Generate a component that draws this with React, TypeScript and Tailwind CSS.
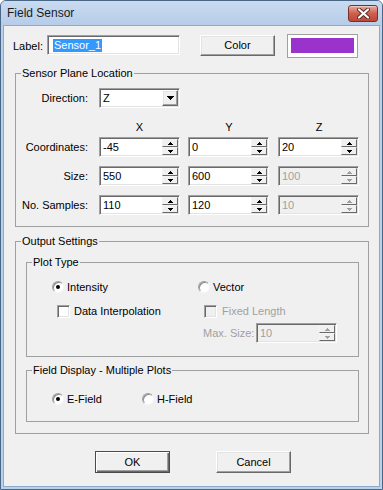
import React from "react";

const sunken =
  "border border-t-[#a0a0a0] border-l-[#a0a0a0] border-b-white border-r-white shadow-[inset_1px_1px_0_#696969,inset_-1px_-1px_0_#e3e3e3]";
const raised =
  "border border-t-white border-l-white border-b-[#696969] border-r-[#696969] shadow-[inset_-1px_-1px_0_#a0a0a0,inset_1px_1px_0_#e3e3e3]";
const spinBtn =
  "border border-t-[#f4f4f4] border-l-[#f4f4f4] border-b-[#696969] border-r-[#696969] bg-[#f0f0f0] flex-1 flex items-center justify-center";

function Tri({ up, color }: { up: boolean; color: string }) {
  return (
    <svg width="5" height="3" viewBox="0 0 5 3" shapeRendering="crispEdges">
      {up ? (
        <polygon points="2,0 3,0 5,3 0,3" fill={color} />
      ) : (
        <polygon points="0,0 5,0 3,3 2,3" fill={color} />
      )}
    </svg>
  );
}

function SpinBox({ value, disabled }: { value: string; disabled?: boolean }) {
  return (
    <div
      className={`${sunken} flex h-[20px] w-[81px] ${
        disabled ? "bg-[#f0f0f0] text-[#a0a0a0]" : "bg-white text-black"
      }`}
    >
      <div className="flex flex-1 items-center pl-[3px]">{value}</div>
      <div className="my-[1px] mr-[1px] flex w-[16px] flex-col">
        <div className={spinBtn}>
          <Tri up color={disabled ? "#a0a0a0" : "#000"} />
        </div>
        <div className={spinBtn}>
          <Tri up={false} color={disabled ? "#a0a0a0" : "#000"} />
        </div>
      </div>
    </div>
  );
}

function Radio({ checked }: { checked?: boolean }) {
  return (
    <span className="flex h-[12px] w-[12px] shrink-0 items-center justify-center rounded-full border border-t-[#a0a0a0] border-l-[#a0a0a0] border-b-[#f6f6f6] border-r-[#f6f6f6] bg-white shadow-[inset_1px_1px_0_#8a8a8a]">
      {checked && <span className="h-[4px] w-[4px] rounded-full bg-black" />}
    </span>
  );
}

function Check({ disabled }: { disabled?: boolean }) {
  return (
    <span
      className={`h-[13px] w-[13px] shrink-0 ${sunken} ${
        disabled ? "bg-[#f0f0f0]" : "bg-white"
      }`}
    />
  );
}

function Group({
  title,
  className,
  children,
}: {
  title: string;
  className: string;
  children: React.ReactNode;
}) {
  return (
    <fieldset className={`border border-[#a0a0a0] p-0 ${className}`}>
      <legend className="ml-[5px] px-[1px] leading-[13px]">{title}</legend>
      {children}
    </fieldset>
  );
}

export default function App() {
  return (
    <div className="flex h-[490px] w-[383px] flex-col rounded-t-[6px] border border-[#4a6788] bg-[#b9d1ea] font-['Liberation_Sans',Arial,sans-serif] text-[11px] leading-[13px] text-black">
      {/* Title bar */}
      <div className="flex h-[24px] items-center justify-between rounded-t-[5px] bg-gradient-to-b from-[#c9dbf0] to-[#b6cce8] pl-[6px] pr-[4px]">
        <span className="text-[12px] text-[#1a1a1a]">Field Sensor</span>
        <div className="mt-[1px] flex h-[17px] w-[30px] items-center justify-center rounded-[3px] border border-[#7a2f26] bg-gradient-to-b from-[#e8aa9c] via-[#cd5f4e] to-[#c04636] shadow-[inset_0_1px_0_#f3c9bf]">
          <svg width="13" height="11" viewBox="0 0 13 11">
            <path d="M2 1.5 L11 9.5 M11 1.5 L2 9.5" stroke="#5a2a24" strokeWidth="4" strokeLinecap="round" />
            <path d="M2 1.5 L11 9.5 M11 1.5 L2 9.5" stroke="#ffffff" strokeWidth="2.2" strokeLinecap="round" />
          </svg>
        </div>
      </div>

      {/* Client area */}
      <div className="mx-[2px] mb-[2px] flex flex-1 flex-col border border-[#8fa9c8] bg-[#f0f0f0]">
        {/* Label row */}
        <div className="mt-[8px] flex items-start pl-[9px]">
          <span className="mt-[6px] w-[34px]">Label:</span>
          <div className={`${sunken} mt-[1px] flex h-[20px] w-[133px] items-center bg-white pl-[5px]`}>
            <span className="bg-[#3399ff] px-[1px] text-white">Sensor_1</span>
          </div>
          <div className={`${raised} ml-[20px] mt-[1px] flex h-[21px] w-[75px] items-center justify-center bg-[#f0f0f0]`}>
            Color
          </div>
          <div className="ml-[12px] flex h-[24px] w-[71px] border border-[#a0a0a0] bg-white px-[3px] pb-[4px] pt-[3px]">
            <div className="flex-1 bg-[#9933cc]" />
          </div>
        </div>

        {/* Sensor Plane Location */}
        <Group title="Sensor Plane Location" className="ml-[11px] mt-[9px] w-[354px] pb-[11px]">
          <div className="mt-[8px] flex items-center">
            <span className="w-[75px] pr-[3px] text-right">Direction:</span>
            <div className={`${sunken} ml-[8px] flex h-[20px] w-[81px] bg-white`}>
              <div className="flex flex-1 items-center pl-[3px]">Z</div>
              <div className={`${raised} my-[1px] mr-[1px] flex w-[16px] items-center justify-center bg-[#f0f0f0]`}>
                <svg width="7" height="4" viewBox="0 0 7 4" shapeRendering="crispEdges">
                  <polygon points="0,0 7,0 4,4 3,4" fill="#000" />
                </svg>
              </div>
            </div>
          </div>

          <div className="mt-[13px] grid grid-cols-[75px_81px_82px_82px] gap-x-[8px] gap-y-[9px]">
            <span />
            <span className="text-center">X</span>
            <span className="text-center">Y</span>
            <span className="text-center">Z</span>
          </div>

          <div className="mt-[3px] grid grid-cols-[75px_81px_82px_82px] items-center gap-x-[8px] gap-y-[9px]">
            <span className="pr-[3px] text-right">Coordinates:</span>
            <SpinBox value="-45" />
            <SpinBox value="0" />
            <SpinBox value="20" />

            <span className="pr-[3px] text-right">Size:</span>
            <SpinBox value="550" />
            <SpinBox value="600" />
            <SpinBox value="100" disabled />

            <span className="pr-[3px] text-right">No. Samples:</span>
            <SpinBox value="110" />
            <SpinBox value="120" />
            <SpinBox value="10" disabled />
          </div>
        </Group>

        {/* Output Settings */}
        <Group title="Output Settings" className="ml-[11px] mt-[8px] w-[354px] pb-[11px]">
          <Group title="Plot Type" className="ml-[10px] mt-[8px] w-[333px] pb-[13px]">
            <div className="mt-[11px] grid grid-cols-[146px_1fr] pl-[25px]">
              <div className="flex h-[14px] items-center gap-[3px]">
                <Radio checked />
                <span>Intensity</span>
              </div>
              <div className="flex h-[14px] items-center gap-[3px]">
                <Radio />
                <span>Vector</span>
              </div>

              <div className="mt-[10px] flex h-[14px] items-center gap-[4px] pl-[5px]">
                <Check />
                <span>Data Interpolation</span>
              </div>
              <div className="mt-[10px] flex h-[14px] items-center gap-[5px] pl-[6px]">
                <Check disabled />
                <span className="text-[#a0a0a0]">Fixed Length</span>
              </div>

              <span />
              <div className="mt-[5px] flex items-center pl-[5px]">
                <span className="w-[53px] text-[#a0a0a0]">Max. Size:</span>
                <SpinBox value="10" disabled />
              </div>
            </div>
          </Group>

          <Group title="Field Display - Multiple Plots" className="ml-[10px] mt-[7px] w-[333px] pb-[15px]">
            <div className="mt-[15px] flex h-[14px] items-center pl-[25px]">
              <div className="flex w-[90px] items-center gap-[3px]">
                <Radio checked />
                <span>E-Field</span>
              </div>
              <div className="flex items-center gap-[3px]">
                <Radio />
                <span>H-Field</span>
              </div>
            </div>
          </Group>
        </Group>

        {/* Buttons */}
        <div className="ml-[91px] mt-[17px] flex gap-[46px]">
          <div className="flex h-[22px] w-[75px] items-center justify-center border border-[#4a4a4a] bg-[#f0f0f0] shadow-[inset_1px_1px_0_#fff,inset_-1px_-1px_0_#696969,inset_-2px_-2px_0_#a0a0a0]">
            OK
          </div>
          <div className={`${raised} flex h-[22px] w-[75px] items-center justify-center bg-[#f0f0f0]`}>
            Cancel
          </div>
        </div>
      </div>
    </div>
  );
}
